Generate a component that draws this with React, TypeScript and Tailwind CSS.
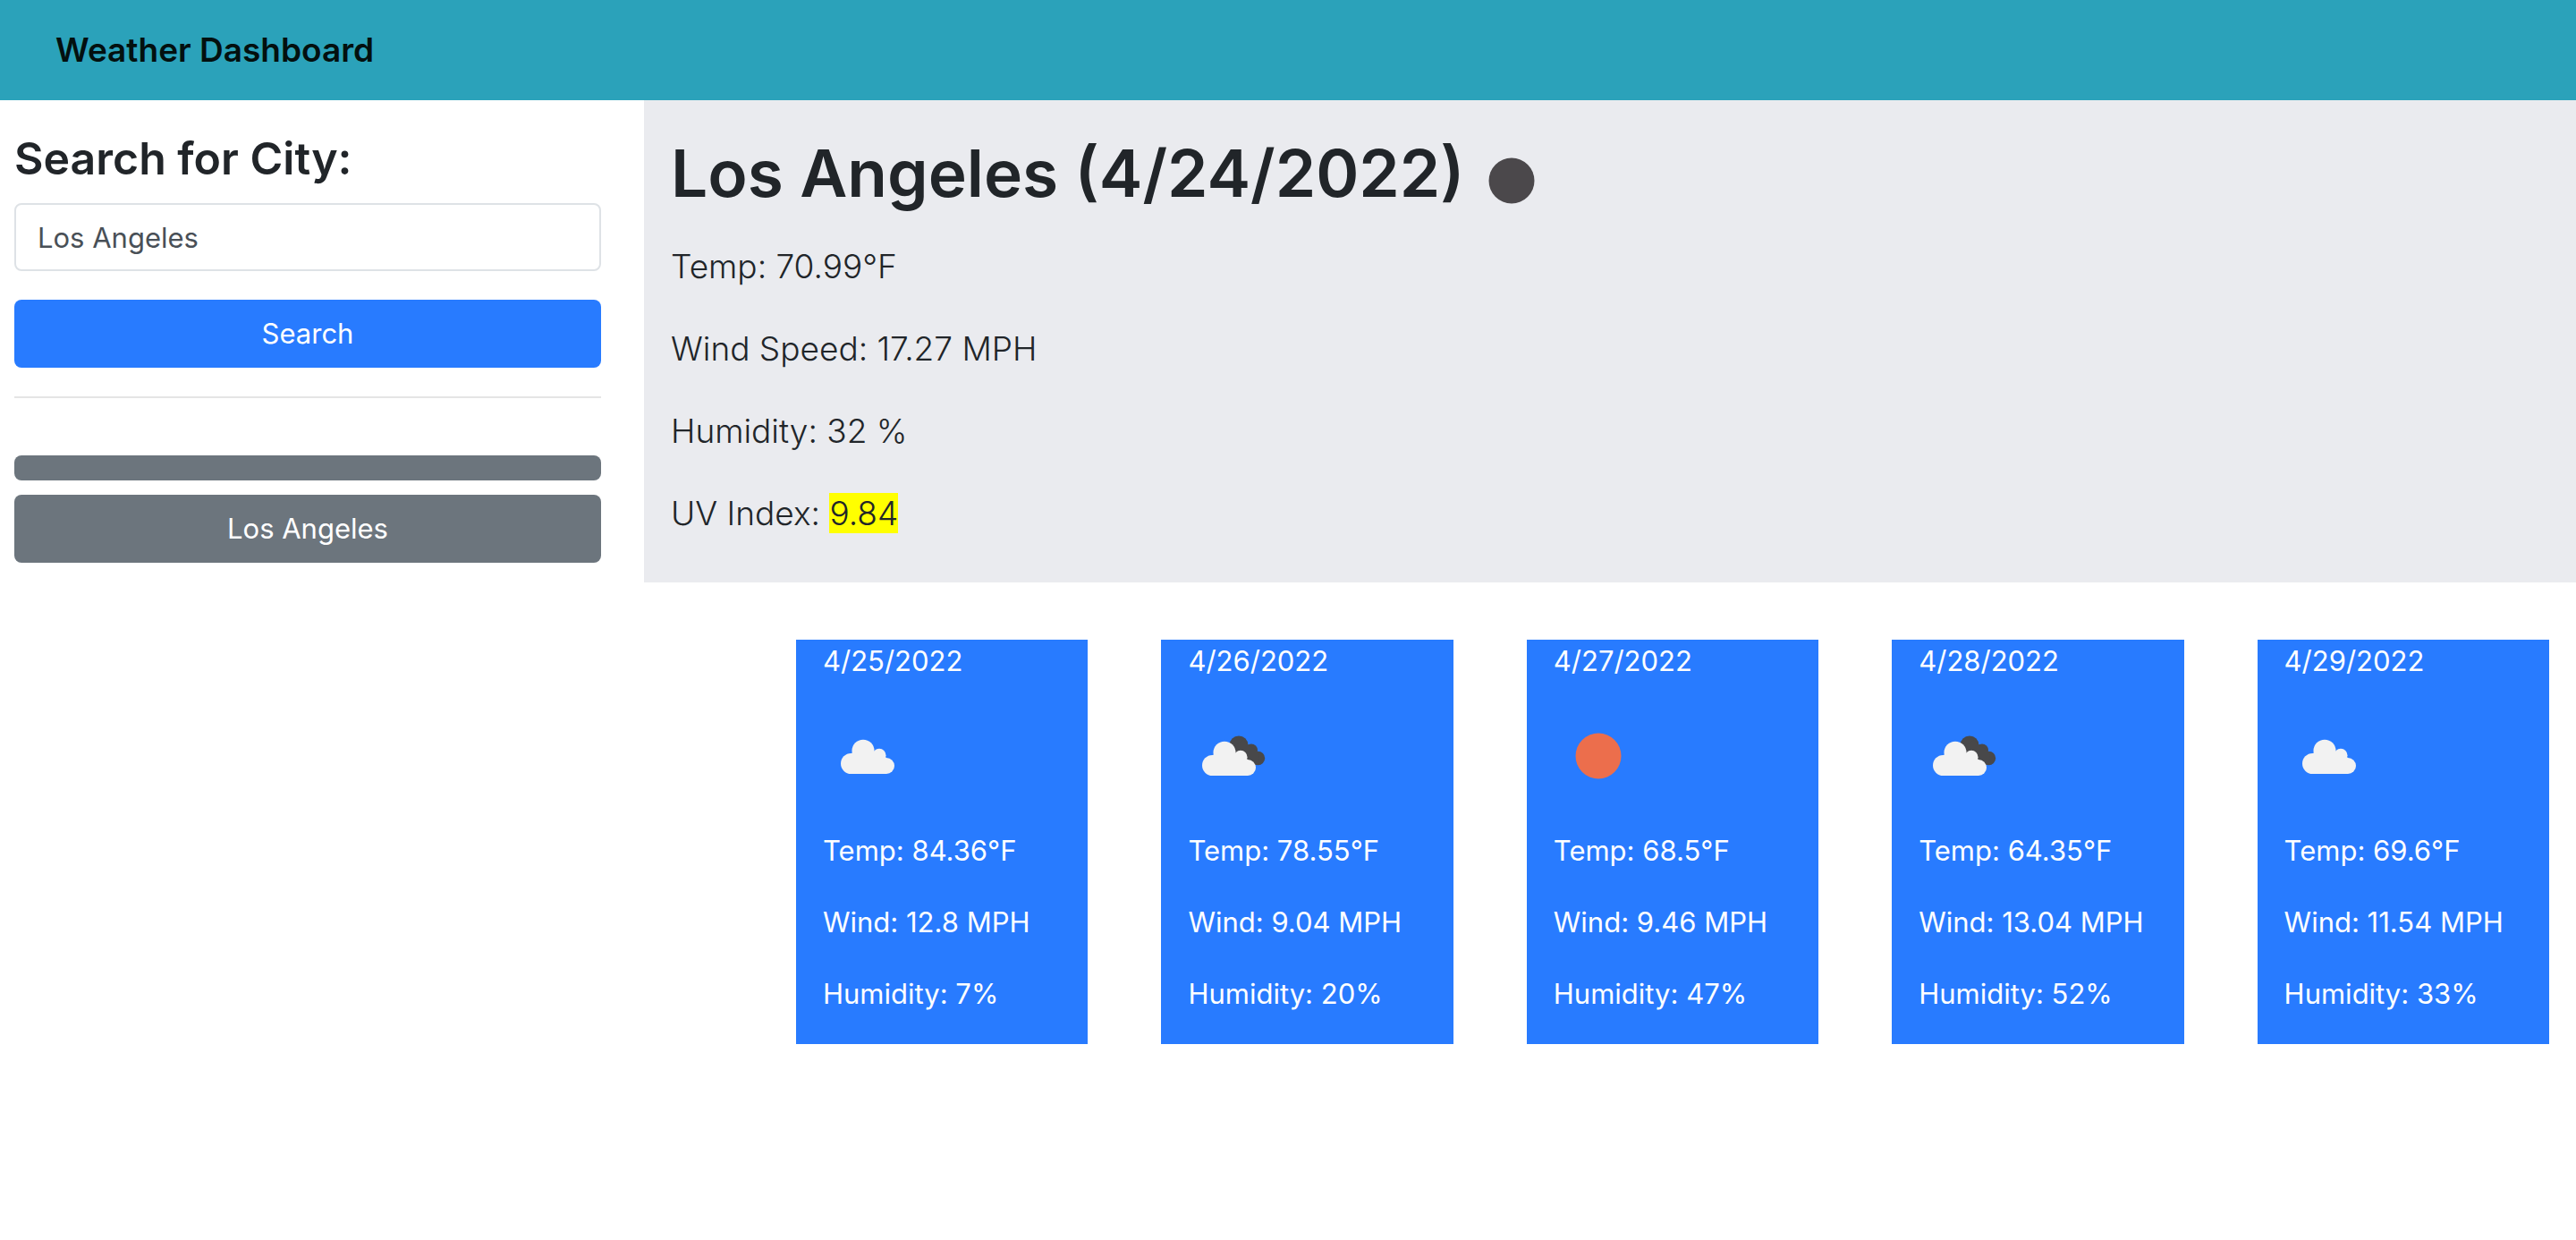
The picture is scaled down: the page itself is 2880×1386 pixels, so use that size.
import { useState } from "react";

type IconKind = "clouds" | "broken" | "sun" | "night";

const cloudPath = (
  <>
    <circle cx="31.5" cy="58.5" r="11.5" />
    <circle cx="45" cy="44.2" r="12.5" />
    <circle cx="63" cy="49.2" r="7.5" />
    <circle cx="71" cy="61" r="9" />
    <path d="M31.5 70H71V52L63 46L45 44L31.5 47Z" />
  </>
);

const iconLabels: Record<IconKind, string> = {
  clouds: "Scattered clouds",
  broken: "Broken clouds",
  sun: "Clear sky",
  night: "Clear night sky",
};

function WeatherIcon({ kind }: { kind: IconKind }) {
  return (
    <svg viewBox="0 0 100 100" className="size-[100px] shrink-0" role="img" aria-label={iconLabels[kind]}>
      {kind === "sun" && <circle cx="50" cy="50" r="25.5" fill="#ec6e4c" />}
      {kind === "night" && <circle cx="50" cy="50" r="25.5" fill="#4b484b" />}
      {kind === "clouds" && <g fill="#f2f2f2">{cloudPath}</g>}
      {kind === "broken" && (
        <>
          <g fill="#48484a">
            <circle cx="57" cy="38" r="10.5" />
            <circle cx="71" cy="43.5" r="7" />
            <circle cx="78.5" cy="52.5" r="7.7" />
            <path d="M50 40L62 32L67 37L77 44L80 50L78 60H55Z" />
          </g>
          <g fill="#f2f2f2" transform="translate(-4 2)">
            {cloudPath}
          </g>
        </>
      )}
    </svg>
  );
}

const forecast: { date: string; icon: IconKind; temp: string; wind: string; humidity: string }[] = [
  { date: "4/25/2022", icon: "clouds", temp: "84.36", wind: "12.8", humidity: "7" },
  { date: "4/26/2022", icon: "broken", temp: "78.55", wind: "9.04", humidity: "20" },
  { date: "4/27/2022", icon: "sun", temp: "68.5", wind: "9.46", humidity: "47" },
  { date: "4/28/2022", icon: "broken", temp: "64.35", wind: "13.04", humidity: "52" },
  { date: "4/29/2022", icon: "clouds", temp: "69.6", wind: "11.54", humidity: "33" },
];

export default function App() {
  const [city, setCity] = useState("Los Angeles");

  return (
    <div className="font-['Inter',sans-serif] text-[31px] leading-[48px] text-[#212529]">
      <header className="flex h-28 items-center bg-[#2ba2ba] px-[62px]">
        <h1 className="text-[37px] leading-[60px] font-semibold text-[#03100f]">Weather Dashboard</h1>
      </header>

      <div className="flex items-start">
        <aside className="w-1/4 pt-8 pr-12 pl-4">
          <form onSubmit={(e) => e.preventDefault()} className="flex flex-col">
            <label htmlFor="city" className="mb-4 text-[50px] leading-[67px] font-semibold">
              Search for City:
            </label>
            <input
              id="city"
              type="text"
              value={city}
              onChange={(e) => setCity(e.target.value)}
              className="mb-8 h-[76px] w-full rounded-lg border-2 border-[#dee2e6] bg-white px-6 text-[#495057] outline-none"
            />
            <button type="submit" className="h-[76px] w-full rounded-lg bg-[#287bff] text-white">
              Search
            </button>
          </form>
          <hr className="mt-8 mb-16 border-t-2 border-[#e5e5e5]" />
          <div className="flex flex-col gap-4">
            <button type="button" aria-label="Empty search" className="h-7 w-full rounded-lg bg-[#6c757d]" />
            <button type="button" className="h-[76px] w-full rounded-lg bg-[#6c757d] text-white">
              Los Angeles
            </button>
          </div>
        </aside>

        <main className="w-3/4">
          <section className="bg-[#eaebef] px-[30px] pt-8 pb-[47px]">
            <div className="mb-6 flex h-[100px] gap-[2px]">
              <h2 className="text-[73px] leading-[100px] font-semibold">Los Angeles (4/24/2022)</h2>
              <div className="pt-2">
                <WeatherIcon kind="night" />
              </div>
            </div>
            <div className="flex flex-col gap-8 text-[37px] leading-[60px] font-light">
              <p>Temp: 70.99°F</p>
              <p>Wind Speed: 17.27 MPH</p>
              <p>Humidity: 32 %</p>
              <p>
                UV Index: <span className="bg-[#ffff00]">9.84</span>
              </p>
            </div>
          </section>

          <section className="grid grid-cols-5 gap-x-[82px] pt-16 pr-[30px] pl-[170px]">
            {forecast.map((day) => (
              <article key={day.date} className="flex flex-col gap-8 bg-[#287bff] pb-8 pl-[30px] whitespace-nowrap text-white">
                <h3>{day.date}</h3>
                <WeatherIcon kind={day.icon} />
                <p>Temp: {day.temp}°F</p>
                <p>Wind: {day.wind} MPH</p>
                <p>Humidity: {day.humidity}%</p>
              </article>
            ))}
          </section>
        </main>
      </div>
    </div>
  );
}
